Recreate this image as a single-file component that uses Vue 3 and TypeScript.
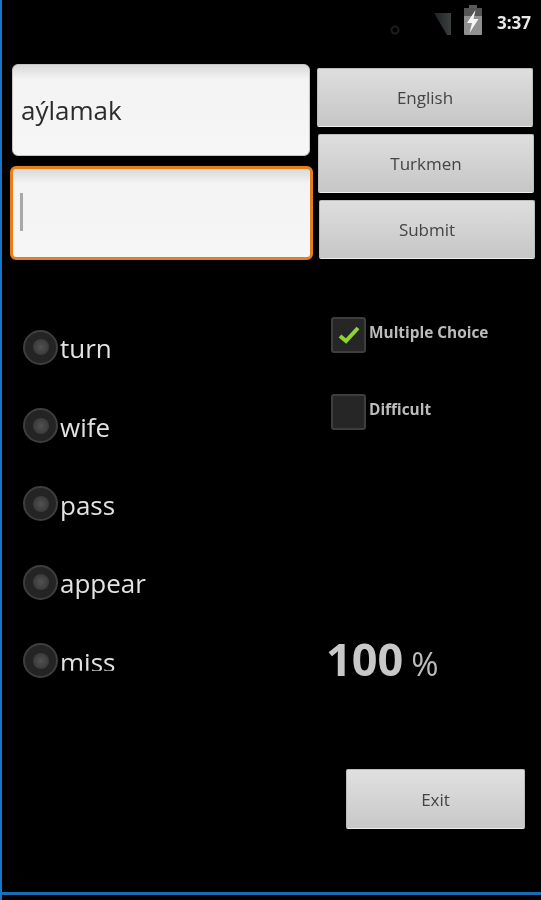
<script setup lang="ts">
const answers: string[] = ['turn', 'wife', 'pass', 'appear', 'miss']
</script>

<template>
  <div class="screen">
    <div class="status">
      <svg class="net" width="10" height="10" viewBox="0 0 10 10"><circle cx="5" cy="5" r="3.5" fill="none" stroke="#1c1c1c" stroke-width="2" /></svg>
      <svg class="signal" width="18" height="24" viewBox="0 0 18 24">
        <defs>
          <linearGradient id="sig" x1="0" y1="0" x2="1" y2="0">
            <stop offset="0" stop-color="#1e2222" />
            <stop offset="1" stop-color="#3a4040" />
          </linearGradient>
        </defs>
        <path d="M0 1H17V23H13Z" fill="url(#sig)" />
      </svg>
      <svg class="battery" width="20" height="31" viewBox="0 0 20 31">
        <rect x="6" y="0" width="8" height="3" fill="#5a5a5a" />
        <rect x="1" y="3" width="18" height="27" rx="1" fill="#909090" />
        <rect x="1" y="3" width="18" height="8" fill="#555" />
        <path d="M12.5 5L4 18H9L6.5 28L15.5 14H10.5Z" fill="#f5f5f5" />
      </svg>
      <span class="time">3:37</span>
    </div>

    <div class="top">
      <div class="fields">
        <div class="field field-word">aýlamak</div>
        <div class="field field-input"><span class="caret"></span></div>
      </div>
      <div class="buttons">
        <button class="btn btn-english">English</button>
        <button class="btn btn-turkmen">Turkmen</button>
        <button class="btn btn-submit">Submit</button>
      </div>
    </div>

    <div class="body">
      <div class="answers">
        <div v-for="(a, i) in answers" :key="a" class="answer">
          <span class="radio"><span class="radio-dot"></span></span>
          <span class="answer-label" :class="{ clipped: i === answers.length - 1 }">{{ a }}</span>
        </div>
      </div>
      <div class="side">
        <div class="check-row">
          <span class="check">
            <svg width="24" height="20" viewBox="0 0 24 20"><path d="M3 11L9 16L21 3" fill="none" stroke="#8ed52f" stroke-width="4" /></svg>
          </span>
          <span class="check-label">Multiple Choice</span>
        </div>
        <div class="check-row">
          <span class="check"></span>
          <span class="check-label">Difficult</span>
        </div>
        <div class="score"><span class="score-num">100</span><span class="score-pct">%</span></div>
        <button class="btn btn-exit">Exit</button>
      </div>
    </div>

    <div class="rule"></div>
  </div>
</template>

<style scoped>
.screen {
  width: 541px;
  height: 900px;
  background: #000;
  border-left: 2px solid #1577c8;
  box-sizing: border-box;
  display: flex;
  flex-direction: column;
  overflow: hidden;
  font-family: "Open Sans", "Noto Sans", sans-serif;
  filter: blur(0.5px);
}
.status {
  height: 64px;
  flex: none;
  position: relative;
}
.net { position: absolute; left: 388px; top: 25px; }
.signal { position: absolute; left: 432px; top: 12px; }
.battery { position: absolute; left: 461px; top: 5px; }
.time {
  position: absolute;
  left: 495px;
  top: 11px;
  color: #e8e8e8;
  font-size: 17px;
  font-weight: 700;
  line-height: 24px;
}
.top {
  display: flex;
  height: 196px;
  flex: none;
  padding-left: 8px;
}
.fields {
  width: 303px;
  display: flex;
  flex-direction: column;
  gap: 10px;
}
.field {
  box-sizing: border-box;
  background: linear-gradient(#d8d8d8 0, #f3f3f3 14px, #f6f6f6 100%);
  border-radius: 6px;
}
.field-word {
  width: 298px;
  height: 92px;
  margin-left: 2px;
  padding-left: 8px;
  line-height: 90px;
  font-size: 26px;
  color: #2c2c2c;
  border: 1px solid #c4c4c4;
}
.field-input {
  height: 94px;
  border: 3px solid #e67f1b;
  padding: 24px 0 0 7px;
}
.caret {
  display: block;
  width: 3px;
  height: 38px;
  background: #a8a8a8;
}
.buttons {
  margin-left: 4px;
  padding-top: 4px;
  display: flex;
  flex-direction: column;
  gap: 7px;
}
.btn {
  width: 216px;
  height: 59px;
  padding: 0;
  box-sizing: border-box;
  font-family: inherit;
  font-size: 17px;
  color: #444;
  background: linear-gradient(#dedede, #c6c6c6);
  border: 1px solid #bcbcbc;
  border-bottom-color: #ececec;
  border-radius: 2px;
}
.btn-turkmen { margin-left: 1px; }
.btn-submit { margin-left: 2px; }
.body {
  flex: 1;
  display: flex;
  min-height: 0;
}
.answers {
  width: 329px;
  flex: none;
  box-sizing: border-box;
  padding: 48px 0 0 21px;
}
.answer {
  height: 78.4px;
  display: flex;
  align-items: center;
}
.radio {
  width: 35px;
  height: 35px;
  box-sizing: border-box;
  flex: none;
  border-radius: 50%;
  border: 2px solid #3e3e3e;
  background: #242424;
  display: flex;
  align-items: center;
  justify-content: center;
}
.radio-dot {
  width: 16px;
  height: 16px;
  border-radius: 50%;
  background: radial-gradient(#525252, #303030);
}
.answer-label {
  margin-left: 2px;
  padding-top: 2px;
  font-size: 26px;
  line-height: 36px;
  color: #e2e2e2;
}
.answer-label.clipped {
  clip-path: inset(0 0 9px 0);
}
.side {
  flex: 1;
  padding-top: 57px;
}
.check-row {
  display: flex;
  align-items: center;
  gap: 3px;
  height: 36px;
  margin-bottom: 41px;
}
.check {
  width: 35px;
  height: 36px;
  box-sizing: border-box;
  flex: none;
  border: 2px solid #3e3e3e;
  border-radius: 3px;
  background: #262626;
  display: flex;
  align-items: center;
  justify-content: center;
}
.check-label {
  padding-bottom: 5px;
  font-size: 15.4px;
  font-weight: 700;
  color: #bcbcbc;
}
.score {
  margin-top: 205px;
  height: 48px;
  display: flex;
  align-items: baseline;
  color: #c8c8c8;
  margin-left: -5px;
}
.score-num {
  font-size: 45px;
  font-weight: 700;
  line-height: 48px;
}
.score-pct {
  font-size: 33px;
  margin-left: 8px;
  line-height: 48px;
  color: #bcbcbc;
}
.btn-exit {
  display: block;
  width: 179px;
  height: 60px;
  margin: 86px 0 0 15px;
  background: linear-gradient(#e0e0e0, #c8c8c8);
}
.rule {
  flex: none;
  height: 3px;
  margin-bottom: 5px;
  background: #1a6cb4;
}
</style>

<style>
html, body { background: #000; }
</style>
